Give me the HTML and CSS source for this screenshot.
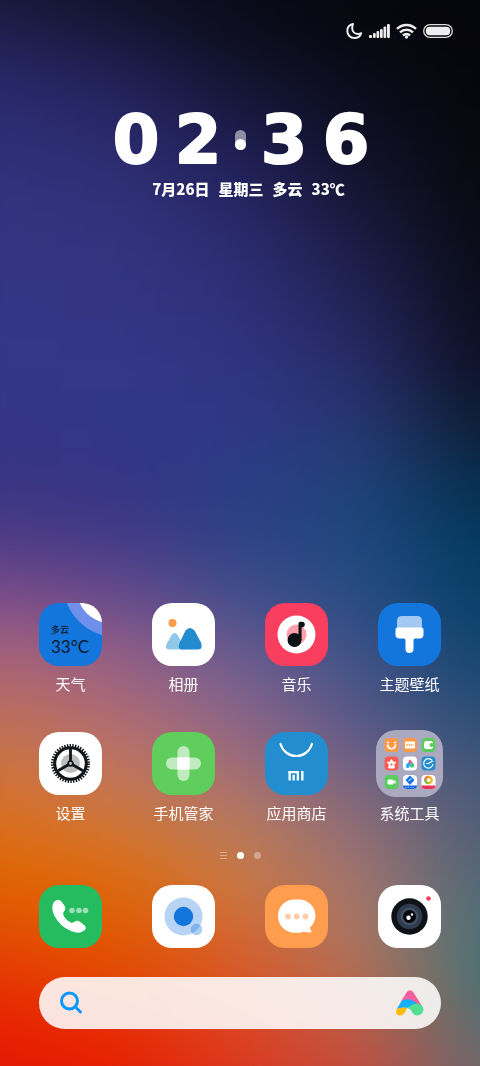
FILE: index.html
```html
<!DOCTYPE html>
<html lang="zh-CN">
<head>
    <meta charset="UTF-8">
    <meta name="viewport" content="width=device-width, initial-scale=1.0">
    <title>桌面</title>
    <link rel="stylesheet" href="styles.css">
</head>
<body>
    <div class="wallpaper" aria-hidden="true">
        <i></i><i></i><i></i><i></i><i></i><i></i><i></i>
        <i></i><i></i><i></i><i></i><i></i><i></i><i></i>
        <i></i><i></i><i></i><i></i><i></i><i></i><i></i>
    </div>

    <div class="screen">
        <header class="status-bar">
            <svg width="17" height="18" viewBox="0 0 17 18" fill="none" stroke="#eee" stroke-width="2" stroke-linejoin="round">
                <path d="M7 2C3.600 2.700 1.300 5.500 1.300 9c0 4 3 7 7 7 3.200 0 6-1.900 6.900-4.800-1 .5-2 .7-3 .7-3.500 0-6-2.500-6-5.700 0-1.500.3-2.900.8-4.200z"/>
            </svg>
            <svg width="21" height="16" viewBox="0 0 21 16" fill="#eee">
                <rect x="0" y="12" width="3" height="3" rx="1"/>
                <rect x="4" y="10" width="2.700" height="5" rx="1"/>
                <rect x="7.500" y="8" width="2.700" height="7" rx="1"/>
                <rect x="11" y="6" width="2.700" height="9" rx="1"/>
                <rect x="14.500" y="3.500" width="2.700" height="11.500" rx="1"/>
                <rect x="18" y="1" width="2.900" height="14" rx="1"/>
            </svg>
            <svg width="21" height="16" viewBox="0 0 21 16" fill="none" stroke="#eee" stroke-width="2.500">
                <path d="M1 5.800c5.400-5.200 13.600-5.200 19 0M4 9.300c3.700-3.500 9.300-3.500 13 0M7 12.500c2-1.900 5-1.900 7 0"/>
                <circle cx="10.500" cy="14" r="1.700" fill="#eee" stroke="none"/>
            </svg>
            <svg width="30" height="14" viewBox="0 0 30 14">
                <rect x=".7" y=".7" width="28.600" height="12.600" rx="6.300" fill="none" stroke="#ddd" stroke-width="1.300"/>
                <rect x="2.800" y="2.800" width="24.400" height="8.400" rx="4" fill="#eee"/>
            </svg>
        </header>

        <section class="clock">
            <svg class="clock-time" width="260" height="84" viewBox="0 0 260 84">
                <text x="26" y="68">0</text>
                <text x="88" y="68">2</text>
                <text x="174" y="68">3</text>
                <text x="236" y="68">6</text>
                <rect x="125" y="35" width="11" height="20" rx="5.500" fill="#fff" opacity=".5"/>
                <circle cx="130.500" cy="49.500" r="5.500" fill="#fff"/>
            </svg>
            <p class="clock-date">
                <span>7月26日</span><span>星期三</span><span>多云</span><span>33℃</span>
            </p>
        </section>

        <main class="apps">
            <a class="app" href="#weather">
                <svg class="app-icon" viewBox="0 0 63 63">
                    <rect width="63" height="63" fill="#1276dc"/>
                    <circle cx="78" cy="-20" r="54" fill="#6e90ea"/>
                    <circle cx="71" cy="-13" r="33" fill="#fff"/>
                    <text class="weather-sky" x="12" y="30">多云</text>
                    <text class="weather-temp" x="12" y="50">33°C</text>
                </svg>
                <span class="app-name">天气</span>
            </a>
            <a class="app" href="#gallery">
                <svg class="app-icon" viewBox="0 0 63 63">
                    <rect width="63" height="63" fill="#fff"/>
                    <circle cx="20.500" cy="20" r="4" fill="#ff9b48"/>
                    <path d="M19.500 32Q22.500 28 25.500 32L34 46.500H17Q12 46 14.500 41Z" fill="#90c8e9"/>
                    <path d="M33.500 27.500Q38 22.500 42.500 27.500L49 39.500Q51.500 46 46 46.500H30Q25 46 27.500 40Z" fill="#228ccf"/>
                </svg>
                <span class="app-name">相册</span>
            </a>
            <a class="app" href="#music">
                <svg class="app-icon" viewBox="0 0 63 63">
                    <rect width="63" height="63" fill="#fa3e5f"/>
                    <circle cx="31.500" cy="31.500" r="19" fill="#fff"/>
                    <circle cx="31.500" cy="31.500" r="10" fill="#fd9fac"/>
                    <circle cx="29.500" cy="37" r="7" fill="#0d1217"/>
                    <path d="M33.500 20.500q0-1.800 1.800-1.800h1.700a2.700 2.700 0 0 1 0 5.600h-.4V37h-3.100z" fill="#0d1217"/>
                </svg>
                <span class="app-name">音乐</span>
            </a>
            <a class="app" href="#themes">
                <svg class="app-icon" viewBox="0 0 63 63">
                    <rect width="63" height="63" fill="#1276dc"/>
                    <path d="M19 26V18q0-5 5-5h15q5 0 5 5v8z" fill="#a3c8f1"/>
                    <path d="M17.500 26.500q0-2 2-2h24q2 0 2 2v5q0 4-4 4H37q-1.500 0-1.500 2V46a4 4 0 0 1-8 0v-8.500q0-2-1.500-2h-4.500q-4 0-4-4z" fill="#fff"/>
                </svg>
                <span class="app-name">主题壁纸</span>
            </a>
            <a class="app" href="#settings">
                <svg class="app-icon" viewBox="0 0 63 63">
                    <rect width="63" height="63" fill="#fff"/>
                    <circle cx="31.500" cy="31.500" r="9.500" fill="#bdbdbd"/>
                    <g fill="none" stroke="#10151a">
                        <circle cx="31.500" cy="31.500" r="15.800" stroke-width="3"/>
                        <circle cx="31.500" cy="31.500" r="18" stroke-width="3" stroke-dasharray="1.400 1.290"/>
                        <path d="M31.500 31.500V17M31.500 31.500L44 38.700M31.500 31.500L19 38.700" stroke-width="2.800"/>
                        <circle cx="31.500" cy="31.500" r="2.300" fill="#ccc" stroke-width="1.800"/>
                    </g>
                </svg>
                <span class="app-name">设置</span>
            </a>
            <a class="app" href="#security">
                <svg class="app-icon" viewBox="0 0 63 63">
                    <rect width="63" height="63" fill="#5fce5d"/>
                    <rect x="25.500" y="14" width="12" height="35" rx="6" fill="#fff" opacity=".6"/>
                    <rect x="14" y="25.500" width="35" height="12" rx="6" fill="#fff" opacity=".6"/>
                    <rect x="25.500" y="25.500" width="12" height="12" fill="#fff"/>
                </svg>
                <span class="app-name">手机管家</span>
            </a>
            <a class="app" href="#store">
                <svg class="app-icon" viewBox="0 0 63 63">
                    <rect width="63" height="63" fill="#228ed0"/>
                    <path d="M15.500 12c5 16 26.500 16 31.500 0" fill="none" stroke="#fff" stroke-width="2.200" stroke-linecap="round"/>
                    <g fill="#fff">
                        <rect x="23.500" y="39" width="2.300" height="9.500"/>
                        <rect x="23.500" y="39" width="10.500" height="2.200" rx="1"/>
                        <rect x="27.500" y="42.700" width="2.300" height="5.800"/>
                        <rect x="31.700" y="40" width="2.300" height="8.500"/>
                        <rect x="36.200" y="39" width="2.300" height="9.500"/>
                    </g>
                </svg>
                <span class="app-name">应用商店</span>
            </a>
            <button class="app" type="button">
                <svg class="app-icon app-folder" viewBox="0 0 67 67">
                    <rect width="67" height="67" fill="#aaa9c0"/>
                    <!-- row 1 -->
                    <rect x="8.500" y="8" width="14" height="14" rx="4" fill="#fd9a48"/>
                    <path d="M11.500 15c1 5 7 5 8 0" fill="none" stroke="#fff" stroke-width="1.600" stroke-linecap="round"/>
                    <circle cx="12" cy="12.500" r="1" fill="#fff"/>
                    <circle cx="19" cy="12.500" r="1" fill="#fff"/>
                    <rect x="27" y="8" width="14" height="14" rx="4" fill="#fd9a48"/>
                    <rect x="29" y="11.500" width="10" height="7" rx="1" fill="#fff"/>
                    <path d="M30.500 15h7" stroke="#fd9a48" stroke-width="1.500" stroke-dasharray="1.500 .6"/>
                    <rect x="45.500" y="8" width="14" height="14" rx="4" fill="#5dcc60"/>
                    <rect x="48" y="11" width="9" height="8" rx="2.500" fill="#fff"/>
                    <circle cx="55.500" cy="15" r="2" fill="#5dcc60"/>
                    <!-- row 2 -->
                    <rect x="8.500" y="26.500" width="14" height="14" rx="4" fill="#fb5b50"/>
                    <path d="M15.500 29.500l1.300 2.600 3 .2-2 2.400.5 3.300h-5.600l.5-3.300-2-2.400 3-.2z" fill="#fff" stroke="#fff" stroke-linejoin="round"/>
                    <circle cx="15.500" cy="34.500" r="1.100" fill="#fb5b50"/>
                    <rect x="27" y="26.500" width="14" height="14" rx="4" fill="#fff"/>
                    <path d="M31.500 34l1.700-4q.8-1.200 1.600 0l2.700 4z" fill="#f05f92"/>
                    <path d="M30 37q0-5 5-4l-2 4.500q-2 1.500-3-.5z" fill="#28a7ee"/>
                    <circle cx="36" cy="35.500" r="2.300" fill="#48c98a"/>
                    <rect x="45.500" y="26.500" width="14" height="14" rx="4" fill="#228ccf"/>
                    <path d="M57 34a4.700 4.700 0 1 1-1-3.600M52 33.500l5-2.500M50 33.500h3.500" fill="none" stroke="#fff" stroke-width="1.200"/>
                    <!-- row 3 -->
                    <rect x="8.500" y="45" width="14" height="14" rx="4" fill="#5dcc60"/>
                    <rect x="11.500" y="49.500" width="6" height="5" rx="1.500" fill="#fff"/>
                    <path d="M17 51.500l2.500-1.500v4L17 52.500z" fill="#fff"/>
                    <rect x="27" y="45" width="14" height="14" rx="4" fill="#fff"/>
                    <path d="M27 55.500h14q0 3.500-4 3.500h-6q-4 0-4-3.500z" fill="#1261dc"/>
                    <path d="M34 45.500l4.500 4.500-4.500 5-4.500-5z" fill="#1472ee"/>
                    <path d="M32.500 51l3-2.500" stroke="#8ed4ff" stroke-width="1.500"/>
                    <path d="M29 57.300h10" stroke="#8eb8f3" stroke-dasharray="1.500 1"/>
                    <rect x="45.500" y="45" width="14" height="14" rx="4" fill="#fff"/>
                    <path d="M45.500 55.500h14q0 3.500-4 3.500h-6q-4 0-4-3.500z" fill="#ef3158"/>
                    <circle cx="52.500" cy="50" r="3.200" fill="none" stroke="#f8b51a" stroke-width="2.300"/>
                    <path d="M49.300 50a3.200 3.200 0 0 0 3.200 3.200" fill="none" stroke="#64c957" stroke-width="2.300"/>
                    <path d="M49.300 50a3.200 3.200 0 0 1 3.200-3.200" fill="none" stroke="#f37739" stroke-width="2.300"/>
                </svg>
                <span class="app-name">系统工具</span>
            </button>
        </main>

        <div class="pager" aria-hidden="true">
            <svg width="7" height="7" viewBox="0 0 7 7" stroke="#fff" opacity=".4">
                <path d="M0 .5h7M0 3.500h7M0 6.500h7"/>
            </svg>
            <span class="page-dot active"></span>
            <span class="page-dot"></span>
        </div>

        <nav class="dock">
            <a class="app" href="#phone" aria-label="电话">
                <svg class="app-icon" viewBox="0 0 63 63">
                    <rect width="63" height="63" fill="#25bc60"/>
                    <path d="M15 17q4-4 7.500-.5l3.500 5q1 3-1.500 5.500-1 2 .5 4.500 3 4.500 6.500 6 2 .8 4-.7 2.500-2 5.500 0l5 4q1.500 2 0 4-5 5-13.500 1.500Q20.500 41.500 15 30q-3.500-9 0-13z" fill="#fff"/>
                    <g fill="#fff" opacity=".55">
                        <circle cx="33" cy="25.500" r="2.800"/>
                        <circle cx="40" cy="25.500" r="2.800"/>
                        <circle cx="46.500" cy="25.500" r="2.800"/>
                    </g>
                </svg>
            </a>
            <a class="app" href="#browser" aria-label="浏览器">
                <svg class="app-icon" viewBox="0 0 63 63">
                    <rect width="63" height="63" fill="#fff"/>
                    <circle cx="31.500" cy="31.500" r="19" fill="#b8d4f4"/>
                    <circle cx="31.500" cy="31.500" r="9.700" fill="#1276dc"/>
                    <circle cx="44.500" cy="44.500" r="5.700" fill="#1276dc" opacity=".35"/>
                </svg>
            </a>
            <a class="app" href="#messages" aria-label="短信">
                <svg class="app-icon" viewBox="0 0 63 63">
                    <rect width="63" height="63" fill="#ff9d4e"/>
                    <path d="M30 14.500h4c9 0 16.500 7 16.500 16 0 5-2.500 9.500-5.500 12q0 2 1.500 3.500.5 1.500-1 1.500-4 .2-7-.8-2 1-4.500 1h-4c-9.500 0-17-7-17-17s8-16.200 17-16.200z" fill="#fff"/>
                    <g fill="#ffcda5">
                        <circle cx="23" cy="31.500" r="2.900"/>
                        <circle cx="31.700" cy="31.500" r="2.900"/>
                        <circle cx="40.500" cy="31.500" r="2.900"/>
                    </g>
                </svg>
            </a>
            <a class="app" href="#camera" aria-label="相机">
                <svg class="app-icon" viewBox="0 0 63 63">
                    <rect width="63" height="63" fill="#fff"/>
                    <circle cx="31.500" cy="31.500" r="18.200" fill="#0e1217"/>
                    <circle cx="31.500" cy="31.500" r="12.800" fill="#2e3b4c"/>
                    <circle cx="31.500" cy="31.500" r="9" fill="#435062"/>
                    <circle cx="31.500" cy="31.500" r="6.500" fill="#05080b"/>
                    <circle cx="30.500" cy="32.800" r="2.200" fill="#fff"/>
                    <circle cx="34" cy="29.500" r="1.200" fill="#fff"/>
                    <circle cx="50.500" cy="13.500" r="2.300" fill="#f83b5d"/>
                </svg>
            </a>
        </nav>

        <form class="search" role="search">
            <label for="search-input" aria-label="搜索">
                <svg width="24" height="24" viewBox="0 0 24 24" fill="none" stroke="#0a98ff" stroke-width="3" stroke-linecap="round">
                    <circle cx="10.500" cy="10" r="8"/>
                    <path d="M16.500 16l5 5"/>
                </svg>
            </label>
            <input id="search-input" type="text">
            <button type="button" aria-label="小爱同学">
                <svg width="28" height="26" viewBox="0 0 28 26">
                    <path d="M5 11.500L10.500 2.500Q14 -2 17.500 2.500L26 16 14 15z" fill="#f6619d"/>
                    <path d="M.8 19L5.500 11Q13 6.500 21 13.500L13 18Q6 17 .8 19z" fill="#14b0fa"/>
                    <path d="M.8 19q3.500-2.500 10.200-1l-2.500 5q-2.500 3-5.500 2.500-4.500-1.500-2.200-6.500z" fill="#ffb908"/>
                    <path d="M11 18q6-5 11.500-4.200 5 1.500 5 6-.8 5.700-6.500 5.700-3 0-5-3.500-1.500-3.500-5-4z" fill="#52df94"/>
                </svg>
            </button>
        </form>
    </div>
</body>
</html>
```
FILE: styles.css
```css
* {
    margin: 0;
    padding: 0;
    box-sizing: border-box;
}

body {
    background-color: #333584;
    color: white;
    font-family: 'Noto Sans CJK SC', sans-serif;
    overflow-x: hidden;
}

svg {
    display: block;
}

/* Wallpaper: bands of colour, blurred into each other */
.wallpaper {
    position: fixed;
    inset: -60px;
    z-index: -1;
    display: flex;
    flex-direction: column;
    filter: blur(28px);
}

.wallpaper i {
    flex: 1;
    background: linear-gradient(90deg, var(--a) 10%, var(--b) 30%, var(--c) 50%, var(--d) 70%, var(--e) 90%);
}

.wallpaper i:nth-child(1) { --a: #141430; --b: #0d0e20; --c: #080914; --d: #06060e; --e: #050509; }
.wallpaper i:nth-child(2) { --a: #1e1e4a; --b: #151534; --c: #0b0c1b; --d: #07070f; --e: #05060a; }
.wallpaper i:nth-child(3) { --a: #28286a; --b: #212158; --c: #131430; --d: #0a0b18; --e: #06060c; }
.wallpaper i:nth-child(4) { --a: #2e2e76; --b: #2a2a6c; --c: #1c1c4e; --d: #0e0f24; --e: #07080e; }
.wallpaper i:nth-child(5) { --a: #32327e; --b: #303078; --c: #252562; --d: #151632; --e: #08090f; }
.wallpaper i:nth-child(6) { --a: #333582; --b: #323480; --c: #2b2c70; --d: #1b1c46; --e: #0a0b15; }
.wallpaper i:nth-child(7) { --a: #333684; --b: #333583; --c: #2e307a; --d: #212456; --e: #0b0d1b; }
.wallpaper i:nth-child(8) { --a: #333786; --b: #333786; --c: #303481; --d: #262b66; --e: #0d1024; }
.wallpaper i:nth-child(9) { --a: #343585; --b: #323686; --c: #2f3785; --d: #263670; --e: #0c1c32; }
.wallpaper i:nth-child(10) { --a: #373584; --b: #343585; --c: #2a3d85; --d: #204178; --e: #072c4a; }
.wallpaper i:nth-child(11) { --a: #4b3a84; --b: #403885; --c: #2d4184; --d: #1e477d; --e: #03385c; }
.wallpaper i:nth-child(12) { --a: #764a8a; --b: #63488b; --c: #3f4c8a; --d: #264c83; --e: #053f67; }
.wallpaper i:nth-child(13) { --a: #a2607e; --b: #8d5c88; --c: #63598f; --d: #395086; --e: #11446f; }
.wallpaper i:nth-child(14) { --a: #b96c60; --b: #aa697a; --c: #85638c; --d: #505688; --e: #244c74; }
.wallpaper i:nth-child(15) { --a: #ca7344; --b: #bd7362; --c: #9e6c7c; --d: #6b5e86; --e: #3c5578; }
.wallpaper i:nth-child(16) { --a: #d96f20; --b: #cc7740; --c: #b57860; --d: #896b7a; --e: #4e5c78; }
.wallpaper i:nth-child(17) { --a: #e16604; --b: #dc6c10; --c: #c87a48; --d: #9e7270; --e: #526676; }
.wallpaper i:nth-child(18) { --a: #e25002; --b: #e15c02; --c: #d26a34; --d: #a97668; --e: #4a7076; }
.wallpaper i:nth-child(19) { --a: #e63202; --b: #e44502; --c: #da5524; --d: #b46c52; --e: #4a7174; }
.wallpaper i:nth-child(20) { --a: #e61c02; --b: #e62602; --c: #dc3e20; --d: #be5444; --e: #646c70; }
.wallpaper i:nth-child(21) { --a: #e61602; --b: #e61c02; --c: #de341c; --d: #c44a3a; --e: #74666a; }

.screen {
    display: flex;
    flex-direction: column;
    min-height: 100vh;
    padding-bottom: 37px;
}

.status-bar {
    display: flex;
    justify-content: flex-end;
    align-items: center;
    gap: 6px;
    height: 62px;
    padding-right: 27px;
}

/* Clock */
.clock {
    display: flex;
    flex-direction: column;
    align-items: center;
    padding-top: 33px;
}

.clock-time text {
    fill: white;
    stroke: white;
    stroke-width: 2px;
    stroke-linejoin: round;
    font-family: 'DejaVu Sans', sans-serif;
    font-size: 67px;
    font-weight: 700;
    text-anchor: middle;
}

.clock-date {
    display: flex;
    gap: 9px;
    padding-left: 17px;
    font-size: 15px;
    font-weight: 900;
    line-height: 20px;
}

/* Apps */
.apps,
.dock {
    display: grid;
    grid-template-columns: repeat(4, 1fr);
    padding: 0 14px;
}

.apps {
    row-gap: 36px;
    margin-top: auto;
}

.app {
    display: flex;
    flex-direction: column;
    align-items: center;
    gap: 6px;
    border: none;
    background: none;
    color: white;
    font-family: inherit;
    text-decoration: none;
    cursor: pointer;
}

.app-icon {
    width: 63px;
    height: 63px;
    border-radius: 20px;
}

.app-folder {
    width: 67px;
    height: 67px;
    margin: -2px;
}

.app-name {
    font-size: 15px;
    line-height: 24px;
}

.weather-sky {
    fill: #0c1a2c;
    font-size: 9px;
    font-weight: 500;
}

.weather-temp {
    fill: #0c1a2c;
    font-family: Lato, sans-serif;
    font-size: 17px;
}

/* Pager */
.pager {
    display: flex;
    justify-content: center;
    align-items: center;
    gap: 10px;
    height: 8px;
    margin: 26px 0;
}

.page-dot {
    width: 7px;
    height: 7px;
    border-radius: 50%;
    background-color: white;
    opacity: 0.35;
}

.page-dot.active {
    opacity: 1;
}

/* Search */
.search {
    display: flex;
    align-items: center;
    height: 52px;
    margin: 29px 39px 0;
    padding: 0 17px 0 20px;
    border-radius: 26px;
    background-color: rgba(255, 255, 255, 0.87);
}

.search input {
    flex: 1;
    min-width: 0;
    height: 100%;
    padding: 0 12px;
    border: none;
    outline: none;
    background: none;
    font-size: 16px;
}

.search button {
    border: none;
    background: none;
    cursor: pointer;
}
```
